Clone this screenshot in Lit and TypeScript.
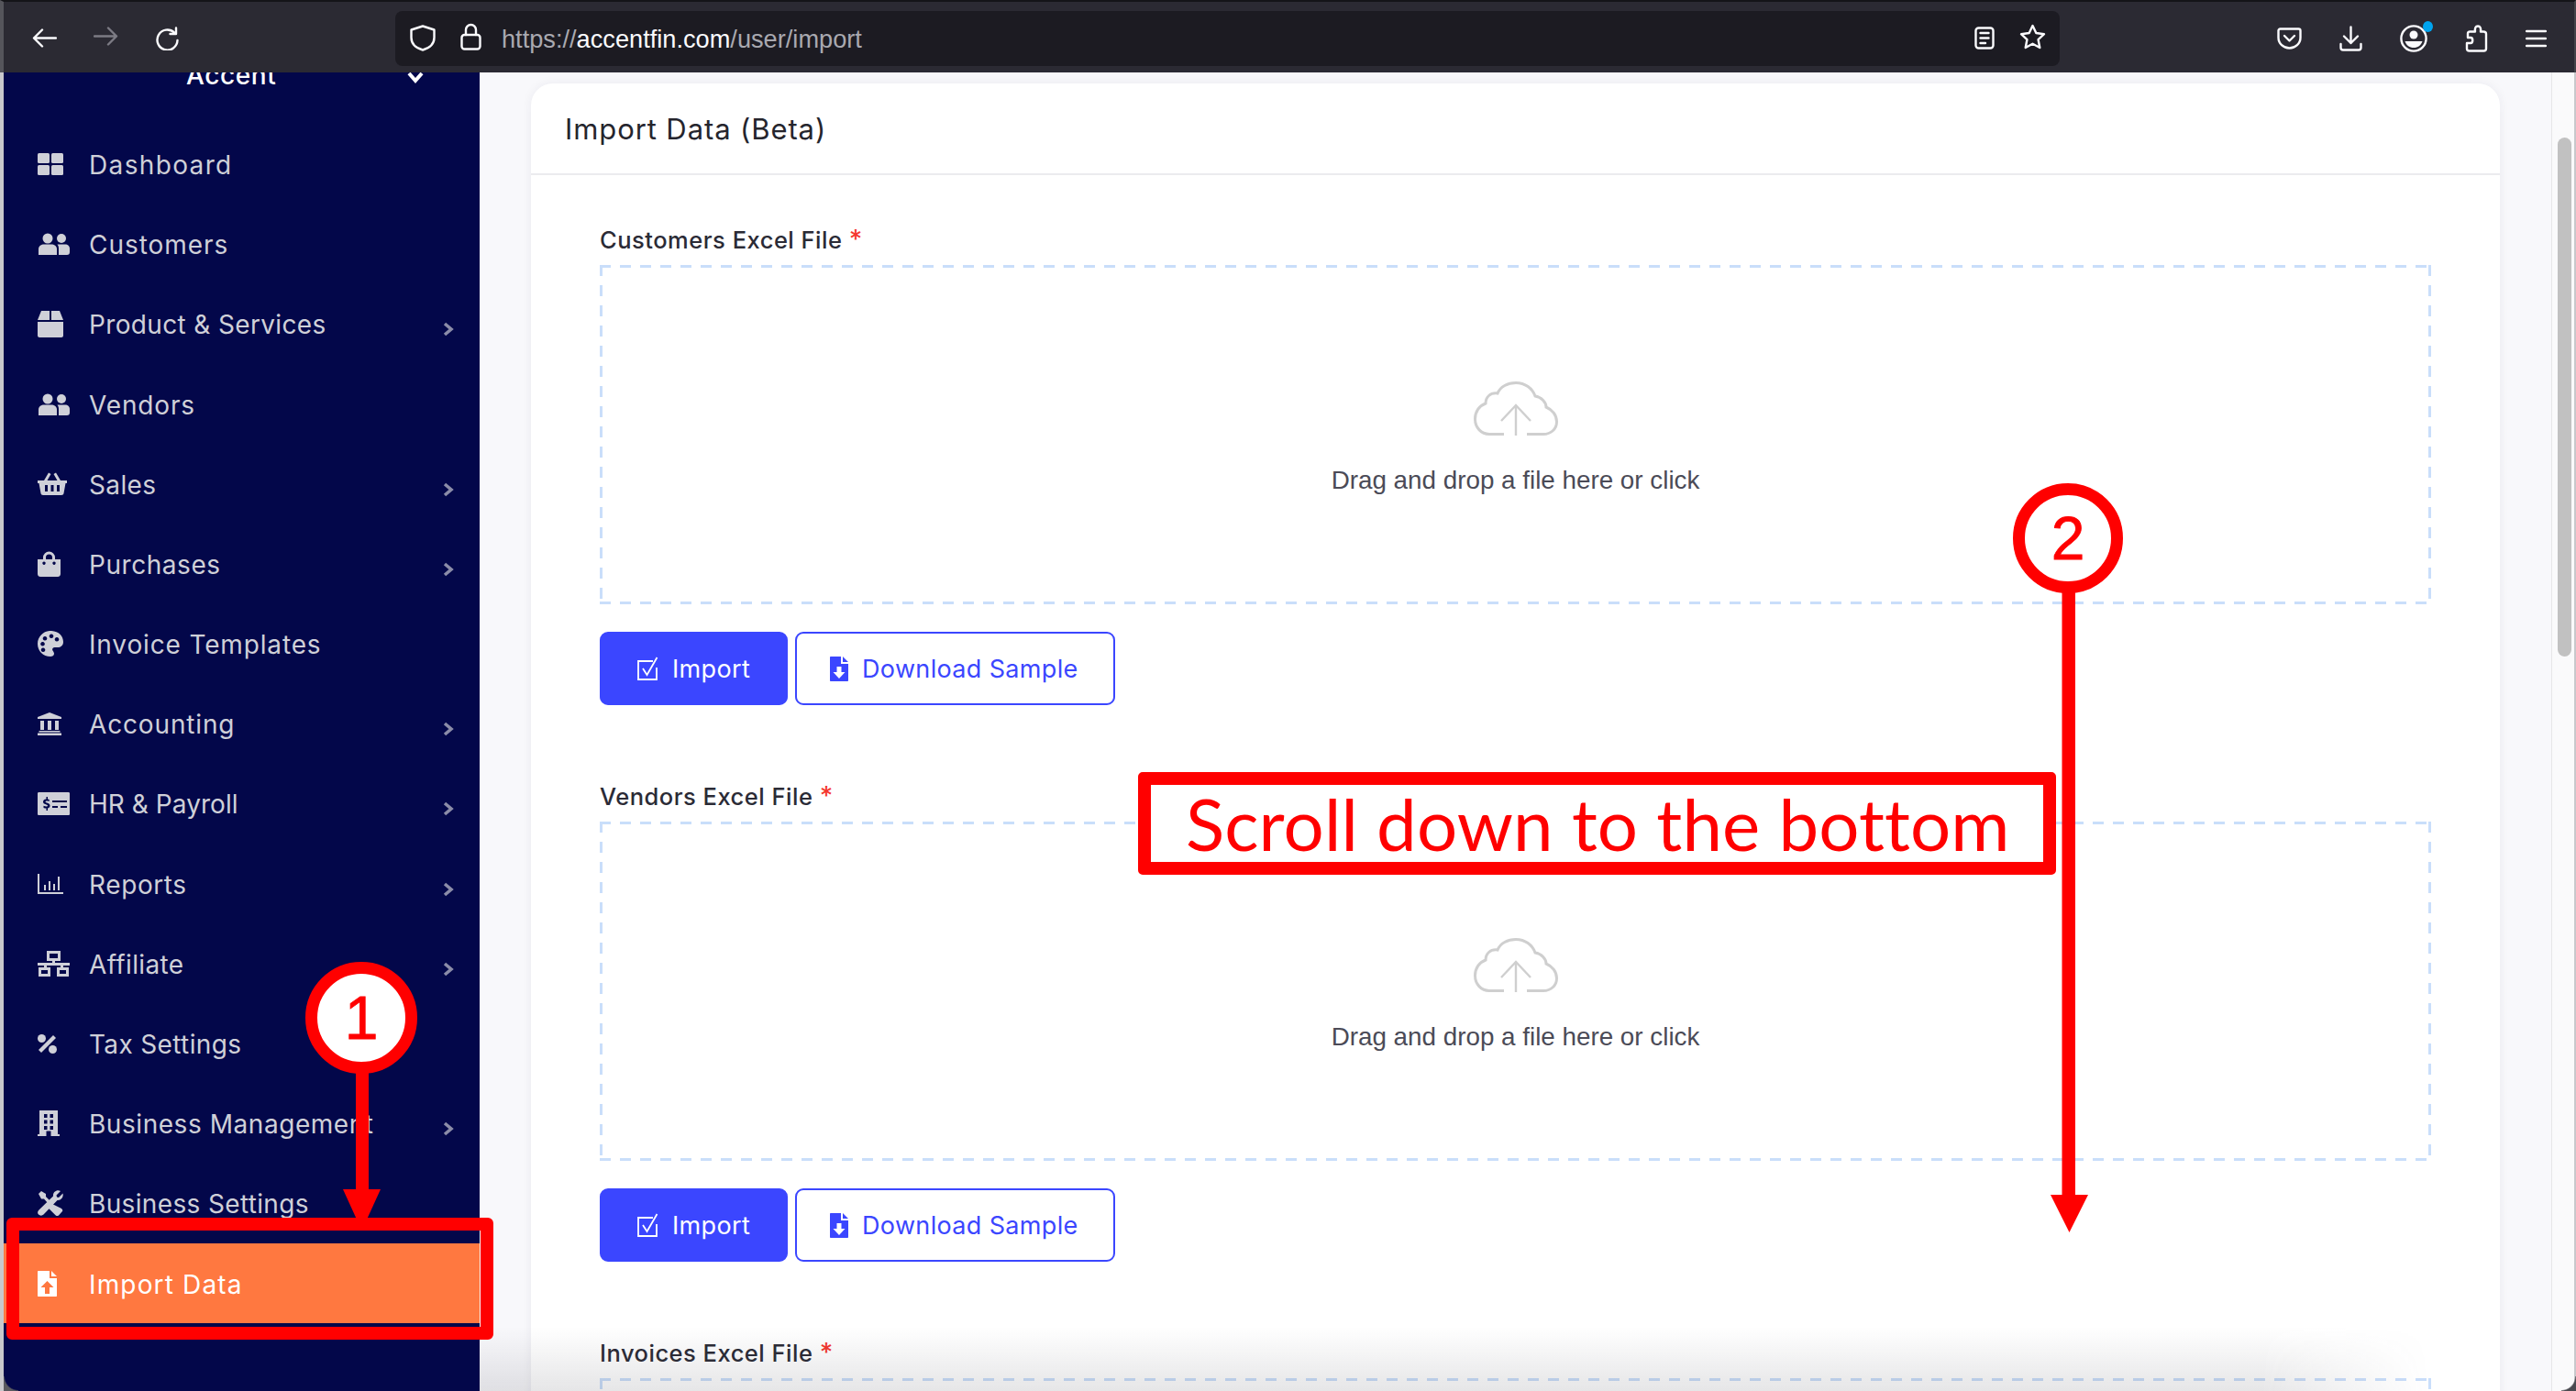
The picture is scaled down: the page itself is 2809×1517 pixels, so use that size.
import { LitElement, html, css, svg, nothing } from "lit";
import { customElement } from "lit/decorators.js";

const ic = (w: number, h: number, inner: unknown) =>
  html`<svg width=${w} height=${h} viewBox="0 0 ${w} ${h}" fill="currentColor">${inner}</svg>`;

const people = svg`<circle cx="11" cy="6" r="5.5"/><circle cx="26" cy="6" r="5"/><path d="M1 24V18C1 14 4 12.5 7 12.5H15C18 12.5 21 14 21 18V24Z"/><path d="M23 24V17C23 15 22.5 13.8 21.5 12.5H30C33 12.5 35 14.5 35 17V21C35 23 34 24 32 24Z"/>`;

const icons: Record<string, unknown> = {
  dash: ic(28, 24, svg`<rect width="13" height="11" rx="1.5"/><rect x="15" width="13" height="11" rx="1.5"/><rect y="13" width="13" height="11" rx="1.5"/><rect x="15" y="13" width="13" height="11" rx="1.5"/>`),
  users: ic(35, 24, people),
  box: ic(28, 29, svg`<path d="M4 0H13V10H0Z"/><path d="M15 0H24L28 10H15Z"/><path d="M0 12H28V27C28 28 27 29 26 29H2C1 29 0 28 0 27Z"/>`),
  basket: ic(32, 25, svg`<path fill-rule="evenodd" d="M0 9H7L12 0.5L14.5 2L10.5 9H21.5L17.5 2L20 0.5L25 9H32V12H30.5L28.5 23C28.3 24.2 27.4 25 26 25H6C4.6 25 3.7 24.2 3.5 23L1.5 12H0ZM8 14V21H11V14ZM14.5 14V21H17.5V14ZM21 14V21H24V14Z"/>`),
  bag: ic(25, 28, svg`<path fill-rule="evenodd" d="M6 9V7A6.5 6.5 0 0 1 19 7V9H25V25C25 27 23.5 28 22 28H3C1.5 28 0 27 0 25V9ZM9 9H16V7A3.5 3.5 0 0 0 9 7ZM7 11.5A1.7 1.7 0 1 0 7.01 11.5ZM18 11.5A1.7 1.7 0 1 0 18.01 11.5Z"/>`),
  palette: ic(28, 28, svg`<path fill-rule="evenodd" d="M13 0C22 -0.5 28 5 28 12C28 16 25 18 22 18H18.5C16.5 18 15.5 20 16.5 21.5C17.5 23 18 24 18 25C18 27 16 28 14 28C6 28 0 22 0 14C0 6.5 6 0.5 13 0ZM5.5 12A2.3 2.3 0 1 0 5.51 12ZM8 6A2.3 2.3 0 1 0 8.01 6ZM15 3.5A2.3 2.3 0 1 0 15.01 3.5ZM21 7A2.3 2.3 0 1 0 21.01 7ZM6 18.5A2.3 2.3 0 1 0 6.01 18.5Z"/>`),
  bank: ic(26, 25, svg`<path d="M13 0L26 5V7H0V5Z"/><rect x="3" y="9" width="4" height="10"/><rect x="11" y="9" width="4" height="10"/><rect x="19" y="9" width="4" height="10"/><rect x="1.5" y="20" width="23" height="1.5"/><rect y="22.5" width="26" height="2.5"/>`),
  money: ic(35, 25, svg`<path fill-rule="evenodd" d="M1.5 0H33.5C34.5 0 35 .5 35 1.5V23.5C35 24.5 34.5 25 33.5 25H1.5C.5 25 0 24.5 0 23.5V1.5C0 .5 .5 0 1.5 0ZM16 9V11H32V9ZM16 15V17H22V15ZM25 15V17H32V15Z"/><path d="M9.5 5V7.5C7 7.7 6 9 6 10.5C6 13.5 11 13 11 14.7C11 15.7 8.5 15.7 6.5 14.8V17C7.5 17.4 8.5 17.6 9.5 17.6V20H11V17.5C13 17 13.5 15.8 13.5 14.5C13.5 11.5 8.5 12 8.5 10.3C8.5 9.3 11 9.5 12.7 10V8C12 7.7 11.5 7.5 11 7.5V5Z" fill="#03074a"/>`),
  chart: ic(28, 22, svg`<rect width="2" height="22"/><rect y="20" width="28" height="2"/><rect x="7" y="12" width="2" height="6"/><rect x="12" y="8" width="2" height="10"/><rect x="17" y="11" width="2" height="7"/><rect x="22" y="3" width="2" height="15"/>`),
  net: ic(35, 28, svg`<path fill-rule="evenodd" d="M10 0H25V11H19V13H35V16H28V18H34V28H21V18H25V16H10V18H14V28H1V18H7V16H0V13H16V11H10ZM13 3V8H22V3ZM4 21V25H11V21ZM24 21V25H31V21Z"/>`),
  percent: ic(21, 21, svg`<circle cx="4.5" cy="4.5" r="4.5"/><circle cx="16.5" cy="16.5" r="4.5"/><path d="M17 1L20 4L4 20L1 17Z"/>`),
  building: ic(24, 28, svg`<path fill-rule="evenodd" d="M2 0H22V26H24V28H0V26H2ZM7 4V8H10.5V4ZM13.5 4V8H17V4ZM7 10.5V14.5H10.5V10.5ZM13.5 10.5V14.5H17V10.5ZM7 17V21H10.5V17ZM13.5 17V21H17V17ZM9.5 22.5V28H14.5V22.5Z"/>`),
  tools: ic(28, 28, svg`<path d="M1 4L4 1L9 4V7L14 12L11.5 14.5L7 9.5H4ZM27 23L23 27.5C22 28.3 20.5 28.3 19.5 27.3L11.5 19.3L16 15L24 19C26 20 28 21 27 23ZM25 1L20.5 5.5L21 7.5L23 8L27.5 3.5C28.5 7 26 11.5 21.5 11L6.5 26.5C5 28 2.5 28 1 26.5C-.5 25 0 23 1.5 21.5L17 6.5C16.5 2 21 -1 25 1Z"/>`),
  file: ic(21, 28, svg`<path fill-rule="evenodd" d="M1 0H13V8H21V27C21 27.6 20.6 28 20 28H1C.4 28 0 27.6 0 27V1C0 .4 .4 0 1 0ZM15 0L21 6H15Z"/><path d="M10.5 11L17.5 18H13V25H8V18H3.5Z" fill="#ff7840"/>`),
};

type Item = { n: string; i: string; ls: number; more?: boolean; active?: boolean };
const items: Item[] = [
  { n: "Dashboard", i: "dash", ls: 1.35 },
  { n: "Customers", i: "users", ls: 0.95 },
  { n: "Product & Services", i: "box", ls: 0.35, more: true },
  { n: "Vendors", i: "users", ls: 0.85 },
  { n: "Sales", i: "basket", ls: 0.35, more: true },
  { n: "Purchases", i: "bag", ls: 0.55, more: true },
  { n: "Invoice Templates", i: "palette", ls: 0.85 },
  { n: "Accounting", i: "bank", ls: 0.85, more: true },
  { n: "HR & Payroll", i: "money", ls: 0.05, more: true },
  { n: "Reports", i: "chart", ls: 0.6, more: true },
  { n: "Affiliate", i: "net", ls: 0.35, more: true },
  { n: "Tax Settings", i: "percent", ls: 0.35 },
  { n: "Business Management", i: "building", ls: 0.55, more: true },
  { n: "Business Settings", i: "tools", ls: 0.35 },
  { n: "Import Data", i: "file", ls: 1.15, active: true },
];

const stroke = (w: number, h: number, inner: unknown) =>
  html`<svg width=${w} height=${h} viewBox="0 0 ${w} ${h}" fill="none" stroke="currentColor" stroke-width="2.4" stroke-linecap="round" stroke-linejoin="round">${inner}</svg>`;

const cloud = html`<svg class="cloud" width="92" height="59" viewBox="0 0 92 59" fill="none" stroke="#cfcfcf" stroke-width="3"><path d="M33 57.5H17C8 57.5 1.5 50 1.5 41C1.5 33 6 26.5 13 24C13 17 18 12 26 13C29 5.5 37 1.5 46 1.5C56 1.5 64 7.5 67 16C74 17 79 23 79 28C86 31 90.5 37 90.5 44C90.5 52 84 57.5 76 57.5H58"/><path d="M46 59V27M30 43L46 26L62 43" stroke-width="2.4"/></svg>`;

@customElement("app-root")
export class AppRoot extends LitElement {
  static styles = css`
    :host { display: block; width: 2809px; height: 1517px; overflow: hidden; position: relative; background: #fff; font-family: Inter, "Liberation Sans", sans-serif; }
    .window { display: flex; flex-direction: column; height: 1517px; }
    .toolbar { flex: none; height: 75px; border-top: 2px solid #141418; border-left: 4px solid #55555b; border-right: 2px solid #44444a; background: #2b2a33; color: #fbfbfe; display: flex; align-items: center; padding: 2px 30px 0 31px; gap: 40px; }
    .toolbar .dim { color: #7c7b84; }
    .url { margin-left: 196px; width: 1815px; height: 60px; background: #1c1b22; border-radius: 8px; display: flex; align-items: center; padding: 0 15px 0 16px; box-sizing: border-box; flex: none; }
    .url .lock { margin-left: 27px; }
    .addr { margin-left: 22px; padding-top: 2px; font: 400 27.2px "Liberation Sans", sans-serif; color: #a9a9b0; flex: 1; }
    .addr b { font-weight: 400; color: #fbfbfe; }
    .url .star { margin-left: 27px; }
    .right { margin-left: auto; display: flex; align-items: center; gap: 41px; }
    .profile { position: relative; display: flex; }
    .dot { position: absolute; right: -6px; top: -4px; width: 11px; height: 12px; border-radius: 50%; background: #00a4ef; }

    .body { flex: 1; display: flex; min-height: 0; padding: 0 2px 0 4px; background: #c8c8cc; }
    .side { flex: none; width: 519px; background: #03074a; overflow: hidden; display: flex; flex-direction: column; }
    .brand { flex: none; height: 40px; margin-top: -17px; margin-bottom: 33.4px; padding-left: 199px; display: flex; align-items: center; color: #fff; font-size: 28px; font-weight: 500; letter-spacing: 0.6px; }
    .brand svg { margin-left: 143px; margin-top: 6px; }
    .item { flex: none; height: 87.2px; display: flex; align-items: center; padding: 0 28px 0 37px; color: #cfd0d8; font-size: 28px; box-sizing: border-box; }
    .item .ib { width: 56px; flex: none; display: flex; align-items: center; }
    .item .lbl { flex: 1; white-space: nowrap; padding-top: 2px; }
    .item .chev { color: #8b8ca8; margin-top: 12px; flex: none; display: flex; }
    .item.active { background: #ff7840; color: #fff; }

    .main { flex: 1; min-width: 0; background: #f8f8fb; padding: 12px 56px 0; overflow: hidden; }
    .card { background: #fff; border-radius: 24px 24px 0 0; box-shadow: 0 0 12px rgba(30,30,60,.06); min-height: 1600px; }
    .card-h { height: 100px; box-sizing: border-box; border-bottom: 2px solid #ebebee; padding: 0 37px; display: flex; align-items: center; font-size: 31px; font-weight: 400; color: #25252d; letter-spacing: .9px; }
    .card-b { padding: 54px 75px 0; }
    .field { height: 607px; box-sizing: border-box; }
    .label { height: 30px; line-height: 32px; font-size: 25.5px; font-weight: 500; color: #2b2b36; letter-spacing: .5px; white-space: nowrap; }
    .label i { color: #f5382e; font-style: normal; font-size: 28px; letter-spacing: 0; }
    .drop { margin-top: 14px; height: 370px; display: flex; flex-direction: column; align-items: center;
      background:
        linear-gradient(90deg, #c9defa 12px, transparent 12px) 0 0 / 22px 3px repeat-x,
        linear-gradient(90deg, #c9defa 12px, transparent 12px) 0 100% / 22px 3px repeat-x,
        linear-gradient(180deg, #c9defa 12px, transparent 12px) 0 0 / 3px 22px repeat-y,
        linear-gradient(180deg, #c9defa 12px, transparent 12px) 100% 0 / 3px 22px repeat-y; }
    .cloud { margin-top: 127px; flex: none; }
    .drop p { margin: 31px 0 0; font: 400 27.8px/36px "Liberation Sans", sans-serif; color: #4b4b57; }
    .btns { margin-top: 30px; display: flex; gap: 8px; }
    .btn { height: 80px; box-sizing: border-box; border-radius: 9px; display: flex; align-items: center; font-size: 27px; letter-spacing: .35px; border: 2px solid #3b46ff; }
    .btn.pri { width: 205px; background: #3b46ff; color: #fff; padding-left: 39px; }
    .btn.sec { width: 349px; background: #fff; color: #3b46ff; padding-left: 36px; }
    .btn svg { margin-right: 15px; flex: none; }

    .scrollbar { flex: none; width: 25px; background: #fafafb; border-left: 1px solid #e6e6e8; padding: 71px 3px 0 6px; box-sizing: border-box; }
    .thumb { height: 566px; border-radius: 8px; background: #c1c1c1; }

    .notes { position: absolute; left: 0; top: 0; pointer-events: none; }
    .redbox { position: absolute; left: 7px; top: 1328px; width: 531px; height: 133px; box-sizing: border-box; border: 14px solid #f00; border-radius: 6px; }
    .scrollnote { position: absolute; left: 1241px; top: 842px; width: 1001px; height: 112px; box-sizing: border-box; border: 14px solid #f00; border-radius: 5px; background: #fff; color: #f00; font: 400 78px/84px Lato, sans-serif; padding-left: 38px; white-space: nowrap; letter-spacing: .14px; }
    .num { font: 400 66px "Liberation Sans", sans-serif; fill: #f00; stroke: #f00; stroke-width: .8px; text-anchor: middle; }
    .shade { position: absolute; left: 523px; right: 0; bottom: 0; height: 70px; pointer-events: none; background: linear-gradient(180deg, rgba(60,60,70,0), rgba(60,60,70,.13)); -webkit-mask-image: linear-gradient(90deg, #000 85%, transparent 93%); }
    .corner { position: absolute; bottom: 0; width: 16px; height: 16px; pointer-events: none; }
    .corner.l { left: 4px; background: radial-gradient(circle at 100% 0, transparent 14.5px, #5a5a60 16px); }
    .corner.r { right: 0; background: radial-gradient(circle at 0 0, transparent 14.5px, #4a4a50 16px); }
  `;

  private field(name: string) {
    return html`<div class="field">
      <div class="label">${name} <i>*</i></div>
      <div class="drop">${cloud}<p>Drag and drop a file here or click</p></div>
      <div class="btns">
        <div class="btn pri">
          <svg width="23" height="26" viewBox="0 0 23 26" fill="none" stroke="currentColor" stroke-width="1.8"><path d="M17 5H1V25H21V12"/><path d="M6 13L10.5 20L21.5 1"/></svg>Import
        </div>
        <div class="btn sec">
          <svg width="20" height="27" viewBox="0 0 20 27" fill="currentColor"><path fill-rule="evenodd" d="M1 0H12V8H20V26C20 26.6 19.6 27 19 27H1C.4 27 0 26.6 0 26V1C0 .4 .4 0 1 0ZM14 0L20 6H14ZM7.5 11V17H3.5L10 24L16.5 17H12.5V11Z"/></svg>Download Sample
        </div>
      </div>
    </div>`;
  }

  render() {
    return html`
      <div class="window">
        <div class="toolbar">
          ${stroke(27, 21, svg`<path d="M26 10.5H2M11 1.5L2 10.5L11 19.5"/>`)}
          <span class="dim">${stroke(27, 21, svg`<path d="M1 10.5H25M16 1.5L25 10.5L16 19.5"/>`)}</span>
          ${stroke(26, 26, svg`<path d="M21 6.5A11 11 0 1 0 24.5 15"/><path d="M23 1.5V8H16.5"/>`)}
          <div class="url">
            ${stroke(28, 29, svg`<path d="M14 1.5L26.5 5.5V14C26.5 21 21 25.5 14 27.5C7 25.5 1.5 21 1.5 14V5.5Z"/>`)}
            <span class="lock">${stroke(23, 30, svg`<rect x="1.5" y="13" width="20" height="15.5" rx="3"/><path d="M6 13V7.5A5.5 5.5 0 0 1 17 7.5V13"/>`)}</span>
            <div class="addr">https://<b>accentfin.com</b>/user/import</div>
            ${stroke(22, 25, svg`<rect x="1.5" y="1.5" width="19" height="22" rx="3"/><path d="M6.5 7H15.5M6.5 12.5H15.5M6.5 18H12"/>`)}
            <span class="star">${stroke(29, 28, svg`<path d="M14.5 2L18.3 10L27 11.2L20.6 17.2L22.3 26L14.5 21.7L6.7 26L8.4 17.2L2 11.2L10.7 10Z"/>`)}</span>
          </div>
          <div class="right">
            ${stroke(27, 24, svg`<path d="M3.5 1.5H23.5C24.7 1.5 25.5 2.3 25.5 3.5V11C25.5 17.5 20 22.5 13.5 22.5C7 22.5 1.5 17.5 1.5 11V3.5C1.5 2.3 2.3 1.5 3.5 1.5Z"/><path d="M8 9L13.5 14.5L19 9"/>`)}
            ${stroke(25, 28, svg`<path d="M12.5 1.5V19M5 11.5L12.5 19L20 11.5M1.5 20V24C1.5 25.5 2.5 26.5 4 26.5H21C22.5 26.5 23.5 25.5 23.5 24V20"/>`)}
            <span class="profile">
              <svg width="30" height="30" viewBox="0 0 30 30"><circle cx="15" cy="15" r="13.6" fill="none" stroke="currentColor" stroke-width="2.4"/><circle cx="15" cy="11" r="4.5" fill="currentColor"/><path d="M5.5 18H24.5C23 22.5 19.5 25 15 25C10.5 25 7 22.5 5.5 18Z" fill="currentColor"/></svg>
              <span class="dot"></span>
            </span>
            ${stroke(25, 30, svg`<path d="M14 1.5C11.5 1.5 10.5 3.5 11 7.5H5C3 7.5 3 9 3 10V14H6C9 14 9 20 6 20H2V26C2 27.5 3 28.5 4.5 28.5H20.5C22 28.5 23 27.5 23 26V10C23 8.5 22 7.5 20 7.5H17C17.5 3.5 16.5 1.5 14 1.5Z"/>`)}
            ${stroke(23, 20, svg`<path d="M1 2H22M1 10H22M1 18H22"/>`)}
          </div>
        </div>
        <div class="body">
          <aside class="side">
            <div class="brand">Accent
              <svg width="18" height="14" viewBox="0 0 18 14" fill="none" stroke="#fff" stroke-width="4"><path d="M2 2L9 10L16 2"/></svg>
            </div>
            ${items.map((it) => html`<div class="item ${it.active ? "active" : ""}">
              <span class="ib">${icons[it.i]}</span>
              <span class="lbl" style="letter-spacing:${it.ls}px">${it.n}</span>
              ${it.more ? html`<span class="chev"><svg width="12" height="16" viewBox="0 0 12 16" fill="none" stroke="currentColor" stroke-width="3.6"><path d="M2 2L9 8L2 14"/></svg></span>` : nothing}
            </div>`)}
          </aside>
          <main class="main">
            <section class="card">
              <div class="card-h">Import Data (Beta)</div>
              <div class="card-b">
                ${this.field("Customers Excel File")}
                ${this.field("Vendors Excel File")}
                ${this.field("Invoices Excel File")}
              </div>
            </section>
          </main>
          <div class="scrollbar"><div class="thumb"></div></div>
        </div>
      </div>

      <div class="shade"></div>
      <div class="corner l"></div>
      <div class="corner r"></div>

      <svg class="notes" width="2809" height="1517" viewBox="0 0 2809 1517">
        <rect x="388" y="1160" width="14" height="140" fill="#f00"/>
        <path d="M374 1297H415L394.5 1342Z" fill="#f00"/>
        <circle cx="394" cy="1110" r="54.5" fill="#fff" stroke="#f00" stroke-width="13"/>
        <text class="num" x="394" y="1133">1</text>
        <rect x="2248.5" y="640" width="14.5" height="665" fill="#f00"/>
        <path d="M2236 1303H2277L2256.5 1344Z" fill="#f00"/>
        <circle cx="2255" cy="587" r="53.5" fill="#fff" stroke="#f00" stroke-width="13"/>
        <text class="num" x="2255" y="610">2</text>
      </svg>
      <div class="redbox"></div>
      <div class="scrollnote">Scroll down to the bottom</div>
    `;
  }
}
